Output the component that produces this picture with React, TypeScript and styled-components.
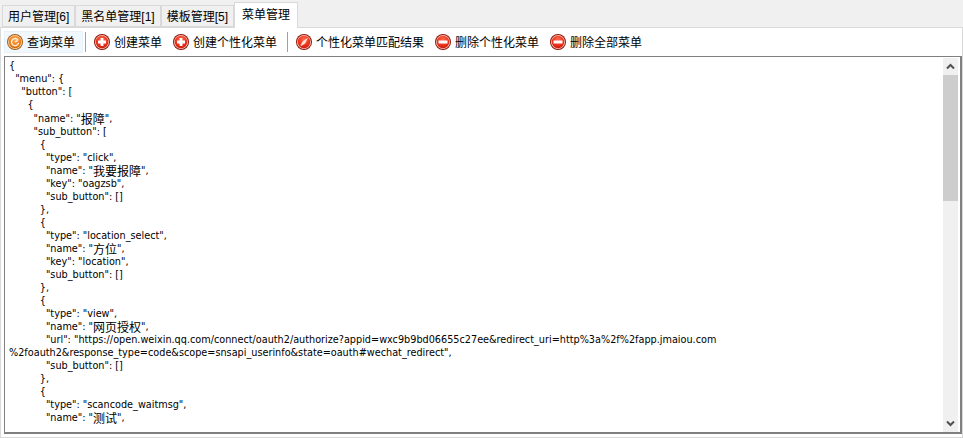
import styled, { createGlobalStyle } from 'styled-components';

const GlobalStyle = createGlobalStyle`
  html, body {
    margin: 0;
    padding: 0;
    background: #f0f0f0;
  }

  body {
    font-family: 'Liberation Sans', 'Noto Sans CJK SC', sans-serif;
    font-size: 12px;
    color: #000000;
  }
`;

const Window = styled.div`
  width: 963px;
  height: 438px;
  display: flex;
  flex-direction: column;
  box-sizing: border-box;
  padding-top: 2px;
  overflow: hidden;
`;

const TabStrip = styled.div`
  display: flex;
  align-items: flex-end;
  height: 25px;
  padding-left: 2px;
`;

const Tab = styled.div<{ $active?: boolean }>`
  box-sizing: border-box;
  height: ${props => (props.$active ? '26px' : '22px')};
  margin-bottom: ${props => (props.$active ? '-1px' : '0')};
  padding: ${props => (props.$active ? '4px 7px 0' : '3px 5px 0')};
  border: 1px solid #d9d9d9;
  border-bottom: ${props => (props.$active ? 'none' : '1px solid #d9d9d9')};
  background: ${props => (props.$active ? '#ffffff' : '#f0f0f0')};
  position: relative;
  z-index: ${props => (props.$active ? 1 : 0)};
  font-size: 12px;
  line-height: 17px;
  white-space: nowrap;
`;

const Panel = styled.div`
  flex: 1;
  min-height: 0;
  display: flex;
  flex-direction: column;
  box-sizing: border-box;
  border: 1px solid #d9d9d9;
  background: #ffffff;
`;

const Toolbar = styled.div`
  display: flex;
  align-items: center;
  height: 28px;
  padding: 0 0 0 3px;
  flex-shrink: 0;
`;

const ToolButton = styled.div<{ $hover?: boolean }>`
  display: flex;
  align-items: center;
  gap: 4px;
  box-sizing: border-box;
  height: 22px;
  padding: 0 8px 0 3px;
  background: ${props => (props.$hover ? '#f0f7fd' : 'transparent')};
  outline: ${props => (props.$hover ? '1px solid #e6f1fa' : 'none')};
  outline-offset: -1px;
  white-space: nowrap;
`;

const ToolLabel = styled.span`
  padding-bottom: 2px;
`;

const Separator = styled.div`
  width: 1px;
  height: 20px;
  margin: 0 5px 0 2px;
  background: #a0a0a0;
`;

const EditorFrame = styled.div`
  flex: 1;
  min-height: 0;
  display: flex;
  box-sizing: border-box;
  margin: 0 0 3px 3px;
  border: 1px solid #808080;
  border-right-width: 2px;
  border-bottom-width: 2px;
  background: #ffffff;
`;

const JsonText = styled.div`
  flex: 1;
  min-width: 0;
  padding: 2.4px 0 0 4px;
  font-family: 'DejaVu Sans Condensed', 'Liberation Sans', sans-serif;
  font-size: 10.78px;
  overflow: hidden;
`;

const JsonLine = styled.div`
  height: 13.04px;
  line-height: 13.04px;
  white-space: pre;
`;

const CjkRun = styled.span`
  display: inline-block;
  height: 13px;
  line-height: 13px;
  vertical-align: top;
  font-family: 'Noto Sans CJK SC', sans-serif;
  font-size: 12px;
`;

const ScrollBar = styled.div`
  display: flex;
  flex-direction: column;
  width: 15px;
  margin: 1px 2px 0 0;
  background: #f0f0f0;
`;

const ScrollArrow = styled.div`
  display: flex;
  align-items: center;
  justify-content: center;
  height: 17px;
  flex-shrink: 0;
`;

const ScrollThumb = styled.div`
  height: 126px;
  flex-shrink: 0;
  background: #cdcdcd;
`;

const ScrollTrack = styled.div`
  flex: 1;
`;

const Chevron = ({ up }: { up?: boolean }) => (
  <svg width="9" height="7" viewBox="0 0 9 7">
    <path
      d={up ? 'M1 5.5 4.5 2 8 5.5' : 'M1 1.5 4.5 5 8 1.5'}
      fill="none"
      stroke="#505050"
      strokeWidth="2"
    />
  </svg>
);

type IconKind = 'query' | 'add' | 'match' | 'remove';

const RoundIcon = ({ kind }: { kind: IconKind }) => {
  const orange = kind === 'query';
  const grad = `grad-${kind}`;
  return (
    <svg width="16" height="16" viewBox="0 0 16 16">
      <defs>
        <radialGradient id={grad} cx="50%" cy="30%" r="70%">
          <stop offset="0%" stopColor={orange ? '#ffa850' : '#ff6a50'} />
          <stop offset="75%" stopColor={orange ? '#ec7a18' : '#e82a14'} />
          <stop offset="100%" stopColor={orange ? '#c06408' : '#c01a0c'} />
        </radialGradient>
      </defs>
      <circle cx="8" cy="8" r="8" fill={orange ? '#a0601e' : '#8c1408'} />
      <circle cx="8" cy="8" r="7" fill={orange ? '#fbd8a8' : '#f8c8b8'} />
      <circle cx="8" cy="8" r="6.2" fill={`url(#${grad})`} />
      {kind === 'add' && (
        <path d="M6.6 4h2.8v2.6H12v2.8H9.4V12H6.6V9.4H4V6.6h2.6z" fill="#ffffff" />
      )}
      {kind === 'remove' && <rect x="3.5" y="6.5" width="9" height="3" fill="#ffffff" />}
      {kind === 'match' && (
        <path d="M12 3.8 9.2 9.4 5.2 12 4.4 11.2 7 7z" fill="#ffe0d0" />
      )}
      {kind === 'query' && (
        <path
          d="M11 6A3.6 3.6 0 1 0 11.6 8.8M8 8.2l3-2"
          fill="none"
          stroke="#ffeeda"
          strokeWidth="1.4"
        />
      )}
    </svg>
  );
};

const jsonLines = [
  '{',
  '  "menu": {',
  '    "button": [',
  '      {',
  '        "name": "报障",',
  '        "sub_button": [',
  '          {',
  '            "type": "click",',
  '            "name": "我要报障",',
  '            "key": "oagzsb",',
  '            "sub_button": []',
  '          },',
  '          {',
  '            "type": "location_select",',
  '            "name": "方位",',
  '            "key": "location",',
  '            "sub_button": []',
  '          },',
  '          {',
  '            "type": "view",',
  '            "name": "网页授权",',
  '            "url": "https://open.weixin.qq.com/connect/oauth2/authorize?appid=wxc9b9bd06655c27ee&redirect_uri=http%3a%2f%2fapp.jmaiou.com',
  '%2foauth2&response_type=code&scope=snsapi_userinfo&state=oauth#wechat_redirect",',
  '            "sub_button": []',
  '          },',
  '          {',
  '            "type": "scancode_waitmsg",',
  '            "name": "测试",',
];

// chinese runs are larger than the latin text around them
const renderLine = (line: string) =>
  line
    .split(/([\u4e00-\u9fff]+)/)
    .map((part, i) => (i % 2 ? <CjkRun key={i}>{part}</CjkRun> : part));

const App = () => {
  return (
    <Window>
      <GlobalStyle />
      <TabStrip>
        <Tab>用户管理[6]</Tab>
        <Tab>黑名单管理[1]</Tab>
        <Tab>模板管理[5]</Tab>
        <Tab $active>菜单管理</Tab>
      </TabStrip>
      <Panel>
        <Toolbar>
          <ToolButton $hover>
            <RoundIcon kind="query" />
            <ToolLabel>查询菜单</ToolLabel>
          </ToolButton>
          <Separator />
          <ToolButton>
            <RoundIcon kind="add" />
            <ToolLabel>创建菜单</ToolLabel>
          </ToolButton>
          <ToolButton>
            <RoundIcon kind="add" />
            <ToolLabel>创建个性化菜单</ToolLabel>
          </ToolButton>
          <Separator />
          <ToolButton>
            <RoundIcon kind="match" />
            <ToolLabel>个性化菜单匹配结果</ToolLabel>
          </ToolButton>
          <ToolButton>
            <RoundIcon kind="remove" />
            <ToolLabel>删除个性化菜单</ToolLabel>
          </ToolButton>
          <ToolButton>
            <RoundIcon kind="remove" />
            <ToolLabel>删除全部菜单</ToolLabel>
          </ToolButton>
        </Toolbar>
        <EditorFrame>
          <JsonText>
            {jsonLines.map((line, i) => (
              <JsonLine key={i}>{renderLine(line)}</JsonLine>
            ))}
          </JsonText>
          <ScrollBar>
            <ScrollArrow>
              <Chevron up />
            </ScrollArrow>
            <ScrollThumb />
            <ScrollTrack />
            <ScrollArrow>
              <Chevron />
            </ScrollArrow>
          </ScrollBar>
        </EditorFrame>
      </Panel>
    </Window>
  );
};

export default App;
